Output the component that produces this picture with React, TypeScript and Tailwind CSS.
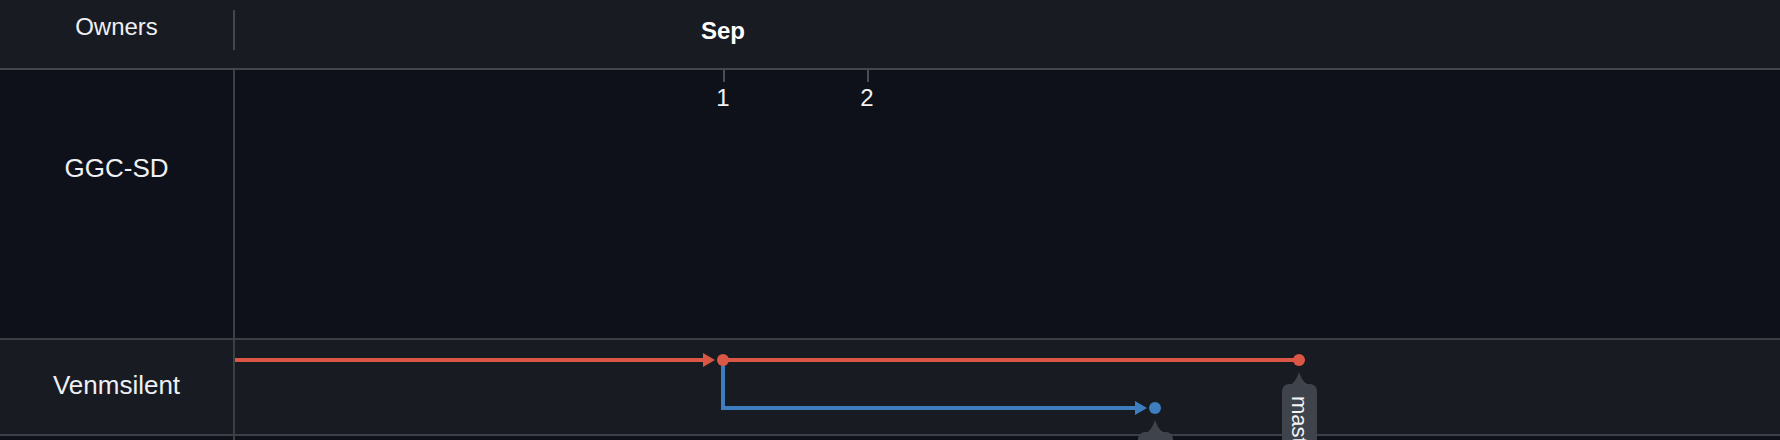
import React from "react";

const FONT = { fontFamily: '"Liberation Sans", Arial, Helvetica, sans-serif' };

function Overlay() {
  const red = "#da5746";
  const blue = "#3e7ebf";
  const tag = "#3f434b";
  return (
    <svg
      className="pointer-events-none absolute left-0 top-0"
      width={1780}
      height={440}
      viewBox="0 0 1780 440"
      style={FONT}
    >
      {/* axis ticks */}
      <rect x={723} y={70} width={2} height={12} fill="#4a4d55" />
      <rect x={867} y={70} width={2} height={12} fill="#4a4d55" />
      <text x={723} y={106} fontSize={24} fill="#f0f2f4" textAnchor="middle">1</text>
      <text x={867} y={106} fontSize={24} fill="#f0f2f4" textAnchor="middle">2</text>

      {/* red branch */}
      <line x1={235} y1={360} x2={704} y2={360} stroke={red} strokeWidth={4} />
      <polygon points="703,353 715,360 703,367" fill={red} />
      <line x1={723} y1={360} x2={1299} y2={360} stroke={red} strokeWidth={4} />

      {/* blue branch */}
      <polyline points="723,360 723,408 1136,408" fill="none" stroke={blue} strokeWidth={4} />
      <polygon points="1135,401 1147,408 1135,415" fill={blue} />
      <circle cx={1155} cy={408} r={6} fill={blue} />

      <circle cx={723} cy={360} r={6} fill={red} />
      <circle cx={1299} cy={360} r={6} fill={red} />

      {/* master tag */}
      <path d="M1299 372 C1301 378 1304 383 1309 385 L1290 385 C1294 383 1297 378 1299 372 Z" fill={tag} />
      <rect x={1282} y={384} width={35} height={90} rx={7} fill={tag} />
      <text
        x={1292}
        y={396}
        fontSize={22}
        fill="#f3f4f6"
        transform="rotate(90 1292 396)"
      >
        master
      </text>

      {/* second tag */}
      <path d="M1155 420 C1157 426 1160 431 1165 433 L1146 433 C1150 431 1153 426 1155 420 Z" fill={tag} />
      <rect x={1138} y={432} width={35} height={60} rx={7} fill={tag} />
    </svg>
  );
}

export default function App() {
  return (
    <div
      className="relative h-[440px] w-[1780px] overflow-hidden bg-[#0e1119] text-[#eef0f3]"
      style={FONT}
    >
      {/* header */}
      <div className="flex h-[70px] border-b-2 border-[#43464d] bg-[#181b22]">
        <div className="w-[235px] shrink-0 pt-[10px]">
          <div className="h-[40px] border-r-2 border-[#43464d] pt-[5px] text-center text-[24px] leading-[24px]">
            Owners
          </div>
        </div>
        <div className="pl-[466px] pt-[19px] text-[24px] font-bold leading-[24px] text-white">
          Sep
        </div>
      </div>

      {/* row 1 */}
      <div className="flex h-[270px] border-b-2 border-[#3c3f46] bg-[#0e1119]">
        <div className="w-[235px] shrink-0 border-r-2 border-[#3c3f46] pt-[85px] text-center text-[26px] leading-[26px]">
          GGC-SD
        </div>
        <div className="flex-1" />
      </div>

      {/* row 2 */}
      <div className="flex h-[96px] border-b-2 border-[#3c3f46] bg-[#181b22]">
        <div className="w-[235px] shrink-0 border-r-2 border-[#3c3f46] pt-[32px] text-center text-[26px] leading-[26px]">
          Venmsilent
        </div>
        <div className="flex-1" />
      </div>

      {/* next row (cut off) */}
      <div className="flex h-[20px] bg-[#0e1119]">
        <div className="w-[235px] shrink-0 border-r-2 border-[#3c3f46]" />
      </div>

      <Overlay />
    </div>
  );
}
